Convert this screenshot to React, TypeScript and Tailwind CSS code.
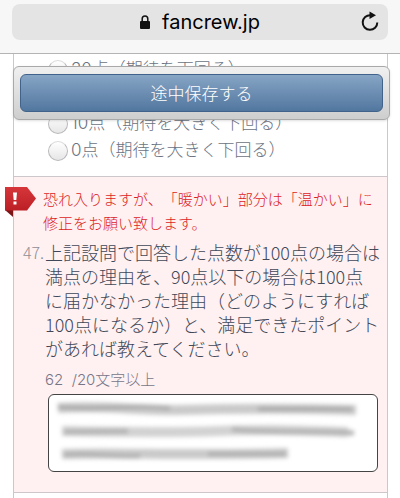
const options = [
  { value: 30, label: "30点（期待を下回る）" },
  { value: 20, label: "20点（期待を下回る）" },
  { value: 10, label: "10点（期待を大きく下回る）" },
  { value: 0, label: "0点（期待を大きく下回る）" },
];

function BrowserBar() {
  return (
    <header className="relative z-20 h-[54px] border-b border-[#b4b4b4] bg-[#f7f7f7] px-3 pt-1">
      <div className="relative flex h-9 items-center justify-center gap-3 rounded-lg bg-[#e4e4e5] text-black">
        <svg viewBox="0 0 10 14" className="h-[14px] w-[10px]" aria-hidden="true">
          <rect x="0" y="6" width="10" height="8" rx="1" fill="#111" />
          <path d="M2.2 7V3.8a2.8 2.8 0 0 1 5.6 0V7" fill="none" stroke="#111" strokeWidth="1.5" />
        </svg>
        <span className="font-['Inter','Liberation_Sans',sans-serif] text-xl leading-6 font-normal">fancrew.jp</span>
        <button type="button" aria-label="再読み込み" className="absolute right-2 top-[7px]">
          <svg viewBox="0 0 20 20" className="size-5" fill="none" aria-hidden="true">
            <path d="M10.500 4.200A7.300 7.300 0 1 0 17.300 11.500" stroke="#111" strokeWidth="2" />
            <path d="M9.500 0.500 16 4.200 9.500 8z" fill="#111" />
          </svg>
        </button>
      </div>
    </header>
  );
}

function ErrorBadge() {
  return (
    <svg viewBox="0 0 31 30" className="absolute -left-[9px] top-[10px] h-[30px] w-[31px]" aria-hidden="true">
      <defs>
        <linearGradient id="badge" x1="0" y1="0" x2="0" y2="1">
          <stop offset="0" stopColor="#d6363a" />
          <stop offset="1" stopColor="#bb1f25" />
        </linearGradient>
      </defs>
      <path d="M0 23h8v7z" fill="#7d1418" />
      <path d="M0 0h22l9 11.500-9 12H0z" fill="url(#badge)" />
      <path d="M8 5.500h4l-.7 7.500H8.700z" fill="#fff" />
      <rect x="8.500" y="14.500" width="3" height="3" fill="#fff" />
    </svg>
  );
}

function SmudgedLines() {
  return (
    <svg
      viewBox="0 0 330 78"
      preserveAspectRatio="none"
      className="pointer-events-none absolute inset-0 size-full blur-[2px]"
      fill="none"
      aria-hidden="true"
    >
      <path d="M10 14C60 11 90 17 130 16S230 14 308 16" stroke="#cacaca" strokeWidth="10" />
      <path d="M10 13C50 17 80 10 122 14M210 15 304 15" stroke="#aaaaaa" strokeWidth="4" />
      <path d="M14 37C70 38 120 39 170 37S240 36 300 38" stroke="#d2d2d2" strokeWidth="10" />
      <path d="M16 38 80 37M184 35C220 40 260 36 306 39" stroke="#b4b4b4" strokeWidth="5" />
      <path d="M14 60C70 58 140 62 240 59" stroke="#cacaca" strokeWidth="10" />
      <path d="M16 61C45 58 60 64 92 62M160 60 238 60" stroke="#afafaf" strokeWidth="4" />
    </svg>
  );
}

export default function App() {
  return (
    <div className="overflow-hidden bg-white font-['Noto_Sans_CJK_JP',sans-serif] font-light [text-spacing-trim:space-all]">
      <BrowserBar />
      <main className="relative ml-[13px] mr-3 border-x border-[#c9c9cd]">
        <div className="absolute -left-px -right-[3px] top-3 z-10 rounded-md border border-[#a9a9a9] bg-linear-to-b from-[#f0f0f0] to-[#cecece] px-[6px] py-[7px] shadow">
          <button
            type="button"
            className="block h-[38px] w-full rounded-md border border-[#41628a] bg-linear-to-b from-[#87a5c5] to-[#52779f] text-[17px] font-light text-white"
          >
            途中保存する
          </button>
        </div>
        <fieldset className="h-[122px] pl-[34px] pt-[2px] font-['Inter','Noto_Sans_CJK_JP',sans-serif] text-[17px] leading-[27px] text-[#6b7382]">
          {options.map((option) => (
            <label key={option.value} className="flex items-center gap-[3px] whitespace-nowrap">
              <input
                type="radio"
                name="score"
                value={option.value}
                className="size-5 shrink-0 appearance-none rounded-full border border-[#b9b9bc] border-t-[#dcdcde] bg-linear-to-b from-white to-[#e6e6e6]"
              />
              {option.label}
            </label>
          ))}
        </fieldset>
        <section className="relative border-y border-[#cdc6ca] bg-[#fff1f2] pb-5 pr-[9px] pt-[10px]">
          <ErrorBadge />
          <p role="alert" className="whitespace-nowrap pl-[29px] text-[15px] leading-6 text-[#dc1c22]">
            恐れ入りますが、「暖かい」部分は「温かい」に
            <br />
            修正をお願い致します。
          </p>
          <div className="mt-[5px] flex whitespace-nowrap text-lg leading-6 text-[#3f4858]">
            <span className="w-[31px] shrink-0 pl-[9px] text-base leading-6 text-[#908d95]">47.</span>
            <label htmlFor="reason">
              上記設問で回答した点数が100点の場合は
              <br />
              満点の理由を、90点以下の場合は100点
              <br />
              に届かなかった理由（どのようにすれば
              <br />
              100点になるか）と、満足できたポイント
              <br />
              があれば教えてください。
            </label>
          </div>
          <p className="mt-2 pl-[31px] font-['Inter','Noto_Sans_CJK_JP',sans-serif] text-[15px] leading-6 text-[#777688]">
            62 &nbsp;/20文字以上
          </p>
          <div className="relative ml-[34px] mt-[2px]">
            <textarea
              id="reason"
              className="block h-[78px] w-full resize-none rounded-md border border-[#444] bg-white"
            />
            <SmudgedLines />
          </div>
        </section>
        <div className="h-4" />
      </main>
    </div>
  );
}
